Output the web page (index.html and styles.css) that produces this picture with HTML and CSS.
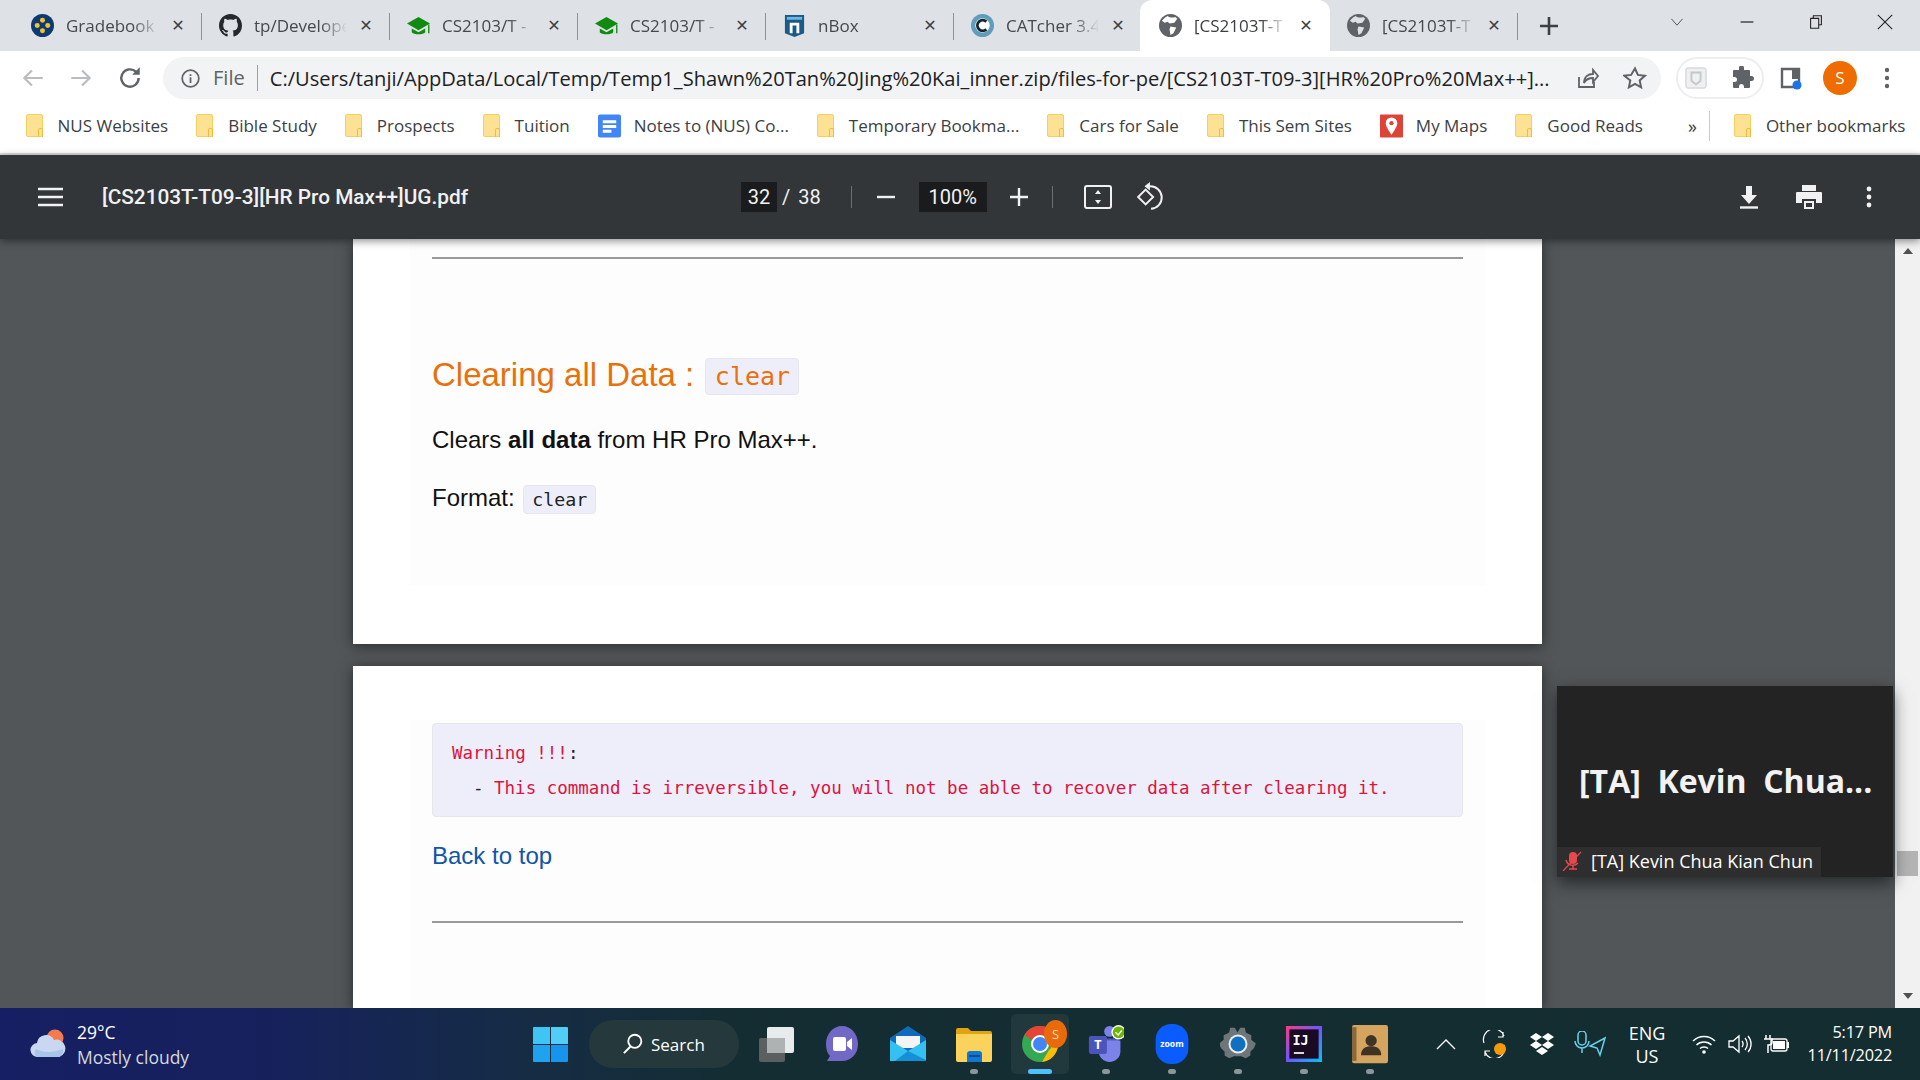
FILE: index.html
```html
<!doctype html>
<html lang="en">
<head>
<meta charset="utf-8">
<title>[CS2103T-T09-3][HR Pro Max++]UG.pdf</title>
<link rel="stylesheet" href="styles.css">
</head>
<body>

<!-- tabs -->
<div class="tabstrip">
	<div class="tab">
		<svg class="favicon" viewBox="0 0 24 24"><circle cx="12" cy="12" r="12" fill="#0d3a73"/><circle cx="12" cy="6.5" r="2.6" fill="#f2c230"/><circle cx="6.5" cy="12" r="2.6" fill="#f2c230"/><circle cx="17.5" cy="12" r="2.6" fill="#f2c230"/><circle cx="12" cy="17.5" r="2.6" fill="#f2c230"/></svg>
		<span class="tab-title">Gradebook</span><span class="tab-close">&#10005;</span>
	</div>
	<div class="tab">
		<svg class="favicon" viewBox="0 0 16 16"><path fill="#24292e" d="M8 0C3.58 0 0 3.58 0 8c0 3.54 2.29 6.53 5.47 7.59.4.07.55-.17.55-.38 0-.19-.01-.82-.01-1.49-2.01.37-2.53-.49-2.69-.94-.09-.23-.48-.94-.82-1.13-.28-.15-.68-.52-.01-.53.63-.01 1.08.58 1.23.82.72 1.21 1.87.87 2.33.66.07-.52.28-.87.51-1.07-1.78-.2-3.64-.89-3.64-3.95 0-.87.31-1.59.82-2.15-.08-.2-.36-1.02.08-2.12 0 0 .67-.21 2.2.82.64-.18 1.32-.27 2-.27s1.36.09 2 .27c1.53-1.04 2.2-.82 2.2-.82.44 1.1.16 1.92.08 2.12.51.56.82 1.27.82 2.15 0 3.07-1.87 3.75-3.65 3.95.29.25.54.73.54 1.48 0 1.07-.01 1.93-.01 2.2 0 .21.15.46.55.38A8.01 8.01 0 0 0 16 8c0-4.42-3.58-8-8-8z"/></svg>
		<span class="tab-title">tp/Develope</span><span class="tab-close">&#10005;</span>
	</div>
	<div class="tab">
		<svg class="favicon" viewBox="0 0 24 24"><path fill="#108a10" d="M12 3 0 10l12 7 12-7z"/><path fill="#108a10" d="M5 15v4c2 3 12 3 14 0v-4l-7 4z"/><path fill="#108a10" d="M22 11h1.4v9H22z"/></svg>
		<span class="tab-title">CS2103/T -</span><span class="tab-close">&#10005;</span>
	</div>
	<div class="tab">
		<svg class="favicon" viewBox="0 0 24 24"><path fill="#108a10" d="M12 3 0 10l12 7 12-7z"/><path fill="#108a10" d="M5 15v4c2 3 12 3 14 0v-4l-7 4z"/><path fill="#108a10" d="M22 11h1.4v9H22z"/></svg>
		<span class="tab-title">CS2103/T -</span><span class="tab-close">&#10005;</span>
	</div>
	<div class="tab">
		<svg class="favicon" viewBox="0 0 24 24"><path fill="#1a5a8a" d="M2 1h20v19l-10 4-10-4z"/><path fill="#6fb7dc" d="M4 3h16v3H4z"/><path fill="#fff" d="M7 20V9h10v11h-3v-8h-4v8z"/></svg>
		<span class="tab-title">nBox</span><span class="tab-close">&#10005;</span>
	</div>
	<div class="tab">
		<svg class="favicon" viewBox="0 0 24 24"><circle cx="12" cy="12" r="12" fill="#5f9dbd"/><circle cx="12" cy="12" r="7.5" fill="#fff"/><path d="M16 8a5.500 5.500 0 1 0 0 8" fill="none" stroke="#17242c" stroke-width="3"/></svg>
		<span class="tab-title">CATcher 3.4</span><span class="tab-close">&#10005;</span>
	</div>
	<div class="tab tab-active">
		<svg class="favicon" viewBox="0 0 24 24"><circle cx="12" cy="12" r="12" fill="#5f6368"/><path fill="#fff" d="M9 2c2 2 6 2 8 1l2 2-3 4-5 1-2-2-3 1-3-2 3-3zM12 13l6 1-3 6-3 2-1-6z"/></svg>
		<span class="tab-title">[CS2103T-T</span><span class="tab-close">&#10005;</span>
	</div>
	<div class="tab">
		<svg class="favicon" viewBox="0 0 24 24"><circle cx="12" cy="12" r="12" fill="#5f6368"/><path fill="#dee1e6" d="M9 2c2 2 6 2 8 1l2 2-3 4-5 1-2-2-3 1-3-2 3-3zM12 13l6 1-3 6-3 2-1-6z"/></svg>
		<span class="tab-title">[CS2103T-T</span><span class="tab-close">&#10005;</span>
	</div>
	<svg class="newtab" viewBox="0 0 20 20"><path d="M10 1v18M1 10h18" stroke="#3c4043" stroke-width="2.6"/></svg>
	<div class="winctl">
		<svg viewBox="0 0 20 20" class="win-chevron"><path d="M3 6l7 8 7-8" fill="none" stroke="#444" stroke-width="1.1"/></svg>
		<svg viewBox="0 0 20 20" class="win-min"><path d="M2 10h16" stroke="#222" stroke-width="1.5"/></svg>
		<svg viewBox="0 0 20 20" class="win-max"><path d="M4 6h9v11H4zM7 6V3h9v10h-3" fill="none" stroke="#222" stroke-width="1.2"/></svg>
		<svg viewBox="0 0 20 20" class="win-close"><path d="M2 2l16 16M18 2 2 18" stroke="#222" stroke-width="1.2"/></svg>
	</div>
</div>

<!-- address bar -->
<div class="toolbar">
	<svg class="nav nav-back" viewBox="0 0 24 24"><path d="M21 12H4M11 5l-7 7 7 7" fill="none" stroke="#b9bcc0" stroke-width="2"/></svg>
	<svg class="nav nav-fwd" viewBox="0 0 24 24"><path d="M3 12h17M13 5l7 7-7 7" fill="none" stroke="#b9bcc0" stroke-width="2"/></svg>
	<svg class="nav nav-reload" viewBox="0 0 24 24"><path d="M20 12a8 8 0 1 1-2.400-5.700" fill="none" stroke="#5f6368" stroke-width="2.200"/><path d="M21 2v7h-7z" fill="#5f6368"/></svg>
	<div class="omnibox">
		<svg class="info" viewBox="0 0 24 24"><circle cx="12" cy="12" r="9.500" fill="none" stroke="#5f6368" stroke-width="2"/><path d="M11 10.500h2V17h-2zM11 7h2v2h-2z" fill="#5f6368"/></svg>
		<span class="scheme">File</span>
		<span class="url">C:/Users/tanji/AppData/Local/Temp/Temp1_Shawn%20Tan%20Jing%20Kai_inner.zip/files-for-pe/[CS2103T-T09-3][HR%20Pro%20Max++]...</span>
		<svg class="omni-share" viewBox="0 0 24 24"><path d="M4 11v10h15v-5" fill="none" stroke="#5f6368" stroke-width="1.800"/><path d="M9 17c0-6 4-9 9-9V4l5 6-5 6v-4c-4 0-7 1-9 5z" fill="none" stroke="#5f6368" stroke-width="1.800"/></svg>
		<svg class="omni-star" viewBox="0 0 24 24"><path d="M12 2.500l2.900 6.400 7 .8-5.200 4.700 1.400 6.900-6.100-3.500-6.100 3.500 1.400-6.900L1.100 9.700l7-.8z" fill="none" stroke="#5f6368" stroke-width="2"/></svg>
	</div>
	<div class="extpill">
		<svg class="ext-shield" viewBox="0 0 24 24"><rect x="1" y="1" width="22" height="22" rx="2" fill="#eef0f1" stroke="#c4c7ca"/><path d="M7 6h10v9l-5 4-5-4z" fill="none" stroke="#c4c7ca" stroke-width="2"/></svg>
		<svg class="ext-puzzle" viewBox="0 0 24 24"><path fill="#5f6368" d="M9 2a2.500 2.500 0 0 1 5 0v2h5a1 1 0 0 1 1 1v5h1.500a2.500 2.500 0 0 1 0 5H20v6a1 1 0 0 1-1 1h-5v-1.500a2.500 2.500 0 0 0-5 0V22H4a1 1 0 0 1-1-1v-5h1.500a2.500 2.500 0 0 0 0-5H3V5a1 1 0 0 1 1-1h5z"/></svg>
	</div>
	<svg class="sidepanel" viewBox="0 0 24 24"><path d="M3 3h17v18H3z" fill="none" stroke="#5f6368" stroke-width="2.400"/><path d="M13 3h7v10h-7z" fill="#5f6368"/><circle cx="18" cy="19" r="4.500" fill="#1a73e8"/></svg>
	<div class="avatar">S</div>
	<svg class="kebab" viewBox="0 0 6 24"><circle cx="3" cy="4" r="2.200" fill="#5f6368"/><circle cx="3" cy="12" r="2.200" fill="#5f6368"/><circle cx="3" cy="20" r="2.200" fill="#5f6368"/></svg>
</div>

<!-- bookmarks -->
<div class="bookmarks">
	<div class="bm"><i class="folder"></i>NUS Websites</div>
	<div class="bm"><i class="folder"></i>Bible Study</div>
	<div class="bm"><i class="folder"></i>Prospects</div>
	<div class="bm"><i class="folder"></i>Tuition</div>
	<div class="bm"><svg class="bm-icon" viewBox="0 0 24 24"><rect width="24" height="24" rx="2" fill="#4285f4"/><path d="M5 6h14v3H5zM5 11h14v3H5zM5 16h9v3H5z" fill="#fff"/></svg>Notes to (NUS) Co...</div>
	<div class="bm"><i class="folder"></i>Temporary Bookma...</div>
	<div class="bm"><i class="folder"></i>Cars for Sale</div>
	<div class="bm"><i class="folder"></i>This Sem Sites</div>
	<div class="bm"><svg class="bm-icon" viewBox="0 0 24 24"><rect width="24" height="24" rx="1" fill="#db4437"/><path d="M12 3a6 6 0 0 0-6 6c0 4 6 12 6 12s6-8 6-12a6 6 0 0 0-6-6z" fill="#fff"/><circle cx="12" cy="9" r="2.200" fill="#db4437"/></svg>My Maps</div>
	<div class="bm"><i class="folder"></i>Good Reads</div>
	<div class="bm-more">&raquo;</div>
	<div class="bm-sep"></div>
	<div class="bm"><i class="folder"></i>Other bookmarks</div>
</div>

<!-- pdf viewer toolbar -->
<div class="pdfbar">
	<svg class="pdf-menu" viewBox="0 0 25 20"><path d="M0 2h25M0 10h25M0 18h25" stroke="#f1f1f1" stroke-width="2.600"/></svg>
	<div class="pdf-title">[CS2103T-T09-3][HR Pro Max++]UG.pdf</div>
	<div class="pdf-pageinput">32</div>
	<span class="pdf-slash">/</span>
	<span class="pdf-total">38</span>
	<div class="pdf-sep pdf-sep-a"></div>
	<svg class="pdf-minus" viewBox="0 0 20 20"><path d="M1 10h18" stroke="#f1f1f1" stroke-width="2.400"/></svg>
	<div class="pdf-zoom">100%</div>
	<svg class="pdf-plus" viewBox="0 0 20 20"><path d="M1 10h18M10 1v18" stroke="#f1f1f1" stroke-width="2.400"/></svg>
	<div class="pdf-sep pdf-sep-b"></div>
	<svg class="pdf-fit" viewBox="0 0 28 24"><rect x="1" y="1" width="26" height="22" rx="2" fill="none" stroke="#f1f1f1" stroke-width="2"/><path d="M14 5l3 4h-6zM14 19l-3-4h6z" fill="#f1f1f1"/></svg>
	<svg class="pdf-rotate" viewBox="0 0 28 28"><path d="M2 14l7-7 7 7-7 7z" fill="none" stroke="#f1f1f1" stroke-width="1.800"/><path d="M13 4a10.500 10.500 0 0 1 1 21" fill="none" stroke="#f1f1f1" stroke-width="1.800"/><path d="M13 0v8l-5-4z" fill="#f1f1f1"/></svg>
	<svg class="pdf-download" viewBox="0 0 20 24"><path d="M7 1h6v9h5l-8 9-8-9h5z" fill="#f1f1f1"/><path d="M1 22.500h18" stroke="#f1f1f1" stroke-width="2.400"/></svg>
	<svg class="pdf-print" viewBox="0 0 26 24"><path d="M6 0h14v6H6z" fill="#f1f1f1"/><path d="M1 7h24a1 1 0 0 1 1 1v10h-6v-4H6v4H0V8a1 1 0 0 1 1-1z" fill="#f1f1f1"/><path d="M8 16h10v8H8z" fill="#f1f1f1"/><path d="M10 18h6v4h-6z" fill="#323639"/></svg>
	<svg class="pdf-more" viewBox="0 0 6 24"><circle cx="3" cy="4" r="2.400" fill="#f1f1f1"/><circle cx="3" cy="12" r="2.400" fill="#f1f1f1"/><circle cx="3" cy="20" r="2.400" fill="#f1f1f1"/></svg>
</div>

<!-- document -->
<div class="viewer">
	<div class="pages">
		<div class="page page-one">
			<div class="page-inner">
				<hr class="rule rule-top">
				<h2 class="heading">Clearing all Data : <code class="pill pill-big">clear</code></h2>
				<p class="para para-first">Clears <b>all data</b> from HR Pro Max++.</p>
				<p class="para para-second">Format: <code class="pill pill-small">clear</code></p>
			</div>
		</div>
		<div class="page page-two">
			<div class="page-inner">
				<div class="warning">
					<div class="warn-line"><span class="red">Warning !!!</span>:</div>
					<div class="warn-line warn-item"><span class="warn-dash">-</span><span class="red">This command is irreversible, you will not be able to recover data after clearing it.</span></div>
				</div>
				<p class="para para-link"><a class="backtop">Back to top</a></p>
				<hr class="rule rule-bottom">
			</div>
		</div>
	</div>
	<div class="scrollbar">
		<i class="arrow-up"></i>
		<div class="thumb"></div>
		<i class="arrow-down"></i>
	</div>
</div>

<!-- taskbar -->
<div class="taskbar">
	<div class="weather">
		<svg class="weather-icon" viewBox="0 0 36 30"><circle cx="25" cy="9" r="8.500" fill="#f47b4f"/><path d="M8 28a7 7 0 0 1-1-14 9 9 0 0 1 17-3 8 8 0 0 1 5 17z" fill="#c9d8f0"/><path d="M6 20c8 4 16 4 27 0v2c0 4-3 6-5 6H8c-2 0-5-3-2-8z" fill="#a9c4ea"/></svg>
		<div class="weather-text"><div class="temp">29&deg;C</div><div class="cond">Mostly cloudy</div></div>
	</div>
	<svg class="winlogo" viewBox="0 0 35 35"><path d="M0 1a1 1 0 0 1 1-1h16v17H0z" fill="#3fc4f6"/><path d="M18 0h16a1 1 0 0 1 1 1v16H18z" fill="#52cdf8"/><path d="M0 18h17v17H1a1 1 0 0 1-1-1z" fill="#1fa3ee"/><path d="M18 18h17v16a1 1 0 0 1-1 1H18z" fill="#1794ec"/></svg>
	<div class="searchpill">
		<svg viewBox="0 0 22 24" class="search-icon"><circle cx="13" cy="9" r="7.200" fill="none" stroke="#fff" stroke-width="2"/><path d="M8 15l-7 7" stroke="#fff" stroke-width="2.200"/></svg>
		<span>Search</span>
	</div>
	<div class="apps">
		<div class="app"><svg viewBox="0 0 36 36"><rect x="1" y="12" width="26" height="24" rx="2" fill="#5c5f60"/><rect x="9" y="1" width="27" height="26" rx="2" fill="#e8ebeb"/><rect x="9" y="12" width="18" height="15" fill="#aeb2b3"/></svg></div>
		<div class="app"><svg viewBox="0 0 36 36"><path d="M18 0c9 0 16 8 16 18s-7 17-16 17H3l3-5C3 27 2 23 2 18 2 8 9 0 18 0z" fill="#7268c6"/><rect x="9" y="11" width="13" height="14" rx="2" fill="#fff"/><path d="M23 16l5-4v12l-5-4z" fill="#fff"/></svg></div>
		<div class="app"><svg viewBox="0 0 36 36"><path d="M0 12 18 0l18 12v22H0z" fill="#0f6cbd"/><path d="M6 10h24v12H6z" fill="#f4f4f4"/><path d="M0 14l18 11 18-11v21H0z" fill="#34c0f0"/><path d="M36 35H5l13-10 18 9z" fill="#1590d8"/></svg></div>
		<div class="app app-running"><svg viewBox="0 0 36 36"><path d="M0 4a2 2 0 0 1 2-2h10l3 3h19a2 2 0 0 1 2 2v5H0z" fill="#e0a40e"/><path d="M0 8h36v26a2 2 0 0 1-2 2H2a2 2 0 0 1-2-2z" fill="#fbd35c"/><path d="M11 36V28a3 3 0 0 1 3-3h9a3 3 0 0 1 3 3v8z" fill="#0f78d4"/><path d="M13 30h11" stroke="#0b4c8a" stroke-width="2"/></svg></div>
		<div class="app app-active">
			<svg viewBox="0 0 36 36" class="chrome-logo"><circle cx="18" cy="18" r="18" fill="#34a853"/><path d="M18 0a18 18 0 0 1 15.600 9H18a9 9 0 0 0-8 5L2.400 9A18 18 0 0 1 18 0z" fill="#ea4335"/><path d="M33.600 9A18 18 0 0 1 20 36l7-12a9 9 0 0 0-1-15z" fill="#fbbc05"/><circle cx="18" cy="18" r="9" fill="#fff"/><circle cx="18" cy="18" r="7" fill="#4285f4"/></svg>
			<div class="chrome-badge">S</div>
		</div>
		<div class="app app-running">
			<svg viewBox="0 0 40 44"><circle cx="24" cy="8" r="6" fill="#7b83eb"/><path d="M14 16h20v14a10 10 0 0 1-20 0z" fill="#5059c9"/><path d="M12 18h24v12a12 12 0 0 1-24 0z" fill="#7b83eb"/><rect x="1" y="13" width="20" height="20" rx="2" fill="#4b53bc"/><text x="11" y="28" class="teams-t">T</text><circle cx="34" cy="9" r="8" fill="#fff"/><circle cx="34" cy="9" r="6.500" fill="#6bb700"/><path d="M30.500 9l3 3 4-5" fill="none" stroke="#fff" stroke-width="1.500"/></svg>
		</div>
		<div class="app app-running"><svg viewBox="0 0 36 44"><rect width="36" height="44" rx="17" fill="#0b5cff"/><text x="18" y="25" class="zoom-t">zoom</text></svg></div>
		<div class="app app-running"><svg viewBox="0 0 36 36"><path d="M18 5l3-5h5l1 5 6 3v5l5 4-2 5-4 4v4l-5 3-5-2h-8l-5 2-5-3v-4l-4-4-2-5 5-4V8l6-3 1-5h5z" transform="scale(.92) translate(1 2)" fill="#6e7679"/><circle cx="18" cy="18" r="9.500" fill="#e8edef"/><circle cx="18" cy="18" r="7.500" fill="#0f6fc0"/></svg></div>
		<div class="app app-running"><svg viewBox="0 0 32 32"><defs><linearGradient id="ij" x1="0" y1="0" x2="1" y2="1"><stop offset="0" stop-color="#fd3b7e"/><stop offset=".5" stop-color="#6b57ff"/><stop offset="1" stop-color="#07c3f2"/></linearGradient></defs><rect width="32" height="32" fill="url(#ij)"/><rect x="3" y="3" width="26" height="26" fill="#1a0a22"/><text x="13" y="17" class="ij-t">IJ</text><path d="M7 24h9" stroke="#fff" stroke-width="1.500"/></svg></div>
		<div class="app app-running"><svg viewBox="0 0 32 34"><rect width="32" height="34" rx="2" fill="#d5a45e"/><path d="M0 2h4v30H0z" fill="#8a6a3c"/><circle cx="17" cy="14" r="5" fill="#3f3326"/><path d="M8 27c0-6 4-8 9-8s9 2 9 8z" fill="#3f3326"/></svg></div>
	</div>
	<div class="tray">
		<svg class="tray-caret" viewBox="0 0 20 12"><path d="M1 11l9-9 9 9" fill="none" stroke="#fff" stroke-width="1.300"/></svg>
		<div class="tray-sync"><svg viewBox="0 0 26 28"><path d="M2 13A10 10 0 0 1 22 6M21 2v5h-5" fill="none" stroke="#fff" stroke-width="1.200"/><path d="M22 15A10 10 0 0 1 3 22M3 26v-5h5" fill="none" stroke="#fff" stroke-width="1.200"/><circle cx="18" cy="19" r="6" fill="#f59a0c"/></svg></div>
		<svg class="tray-dropbox" viewBox="0 0 24 22"><path d="M6 0l6 4-6 4-6-4zM18 0l6 4-6 4-6-4zM6 8l6 4-6 4-6-4zM18 8l6 4-6 4-6-4zM12 14l6 4-6 4-6-4z" fill="#fff"/></svg>
		<svg class="tray-mic" viewBox="0 0 32 26"><rect x="4" y="0" width="8" height="14" rx="4" fill="none" stroke="#69d2ea" stroke-width="1.500"/><path d="M1 10a7 7 0 0 0 14 0M8 17v5" fill="none" stroke="#69d2ea" stroke-width="1.500"/><path d="M31 7 16 15l7 2 3 7z" fill="none" stroke="#69d2ea" stroke-width="1.500"/></svg>
		<div class="tray-lang">ENG<br>US</div>
		<svg class="tray-wifi" viewBox="0 0 24 20"><path d="M1 7c6-6 16-6 22 0M4.500 11c4-4 11-4 15 0M8 14.500c2-2 6-2 8 0" fill="none" stroke="#fff" stroke-width="1.500"/><circle cx="12" cy="18" r="1.800" fill="#fff"/></svg>
		<svg class="tray-vol" viewBox="0 0 24 20"><path d="M1 7h4l6-5v16l-6-5H1z" fill="none" stroke="#fff" stroke-width="1.300"/><path d="M14 7a5 5 0 0 1 0 6M17 4a9 9 0 0 1 0 12M20 2a12 12 0 0 1 0 16" fill="none" stroke="#fff" stroke-width="1.300"/></svg>
		<svg class="tray-batt" viewBox="0 0 26 20"><path d="M3 1v4M7 1v4M1 5h8v3a3 3 0 0 1-3 3h-1v8" fill="none" stroke="#fff" stroke-width="1.500"/><rect x="8" y="5" width="16" height="12" rx="2" fill="none" stroke="#fff" stroke-width="1.300"/><rect x="10" y="7" width="12" height="8" fill="#fff"/><rect x="24" y="8" width="2" height="6" fill="#fff"/></svg>
		<div class="tray-clock">5:17 PM<br>11/11/2022</div>
	</div>
</div>

<!-- zoom call thumbnail floating over the screen -->
<div class="zoomcall">
	<div class="zoomcall-name">[TA]&nbsp; Kevin&nbsp; Chua...</div>
	<div class="zoomcall-label">
		<svg viewBox="0 0 20 20"><rect x="7" y="1" width="8" height="12" rx="4" fill="#e5484d"/><path d="M4 9a7 7 0 0 0 12 3M11 15v3M7 18h8" fill="none" stroke="#e5484d" stroke-width="1.500"/><path d="M1 20 19 1" stroke="#e5484d" stroke-width="1.200"/></svg>
		<span>[TA] Kevin Chua Kian Chun</span>
	</div>
</div>

</body>
</html>
```
FILE: styles.css
```css
html, body {
	width:100%;
	height:100%;
	margin:0;
	padding:0;
	overflow:hidden;
}

body {
	display:flex;
	flex-direction:column;
	font-family:"Open Sans", sans-serif;
	color:#202124;
	background:#525659;
}

svg {
	display:block;
	flex:none;
}

/* tabs */
.tabstrip {
	display:flex;
	align-items:center;
	height:51px;
	flex:none;
	padding-left:14px;
	background:#dee1e6;
}

.tab {
	position:relative;
	display:flex;
	align-items:center;
	width:188px;
	height:51px;
	padding-left:17px;
	box-sizing:border-box;
	font-size:17px;
	color:#45494d;
}

.tab::after {
	content:"";
	position:absolute;
	right:0;
	top:13px;
	height:27px;
	width:1px;
	background:#8f9399;
}

.tab-active {
	width:190px;
	margin-left:-2px;
	padding-left:19px;
	background:#fff;
	border-radius:12px 12px 0 0;
	color:#3c4043;
}

.tab-active::after, .tab:nth-child(6)::after {
	display:none;
}

.favicon {
	width:23px;
	height:23px;
}

.tab-title {
	width:98px;
	margin-left:12px;
	white-space:nowrap;
	overflow:hidden;
	-webkit-mask-image:linear-gradient(90deg, #000 68%, transparent 95%);
	mask-image:linear-gradient(90deg, #000 68%, transparent 95%);
}

.tab-close {
	width:24px;
	margin-left:2px;
	text-align:center;
	font-size:16px;
	font-weight:700;
	color:#3c4043;
	font-family:"DejaVu Sans", sans-serif;
}

.newtab {
	width:20px;
	height:20px;
	margin-left:21px;
}

.winctl {
	display:flex;
	align-items:center;
	margin-left:auto;
}

.win-chevron { width:16px; height:16px; margin-right:54px; margin-top:-8px; }
.win-min { width:16px; height:16px; margin-right:52px; margin-top:-8px; }
.win-max { width:18px; height:18px; margin-right:51px; margin-top:-8px; }
.win-close { width:18px; height:18px; margin-right:26px; margin-top:-8px; }

/* address bar */
.toolbar {
	display:flex;
	align-items:center;
	height:52px;
	padding-top:2px;
	box-sizing:border-box;
	flex:none;
	background:#fff;
}

.nav {
	width:26px;
	height:26px;
}

.nav-back { margin-left:20px; }
.nav-fwd { margin-left:22px; }
.nav-reload { margin-left:23px; }

.omnibox {
	display:flex;
	align-items:center;
	width:1498px;
	height:42px;
	margin-left:20px;
	padding-left:17px;
	box-sizing:border-box;
	border-radius:21px;
	background:#f1f3f4;
	font-size:20.100px;
	white-space:nowrap;
}

.info {
	width:21px;
	height:21px;
}

.scheme {
	margin-left:12px;
	padding-right:12px;
	border-right:1px solid #9aa0a6;
	line-height:26px;
	color:#5f6368;
}

.url {
	margin-left:12px;
	width:1281px;
	color:#202124;
}

.omni-share { width:24px; height:24px; margin-left:24px; }
.omni-star { width:24px; height:24px; margin-left:24px; }

.extpill {
	display:flex;
	align-items:center;
	width:88px;
	height:42px;
	margin-left:15px;
	box-sizing:border-box;
	border:2px solid #eceef0;
	border-radius:21px;
}

.ext-shield { width:22px; height:24px; margin-left:7px; }
.ext-puzzle { width:24px; height:24px; margin-left:23px; }
.sidepanel { width:24px; height:24px; margin-left:15px; }

.avatar {
	width:34px;
	height:34px;
	margin-left:20px;
	border-radius:50%;
	background:#ef6c00;
	color:#fff;
	text-align:center;
	font-size:17px;
	line-height:34px;
}

.kebab { width:6px; height:24px; margin-left:27px; }

/* bookmarks */
.bookmarks {
	display:flex;
	align-items:center;
	gap:28px;
	height:50px;
	flex:none;
	box-sizing:content-box;
	padding:0 0 0 25.500px;
	background:#fff;
	border-bottom:2px solid #dcdcdc;
	font-size:17px;
	color:#3c4043;
	white-space:nowrap;
}

.bm {
	display:flex;
	align-items:center;
	gap:15px;
	margin-top:-5px;
}

.folder {
	position:relative;
	display:block;
	width:17px;
	height:23px;
	box-sizing:border-box;
	background:#fde293;
	border:1px solid #f6cf5f;
	border-radius:2px;
}

.folder::after {
	content:"";
	position:absolute;
	right:-1px;
	bottom:-1px;
	width:3px;
	height:8px;
	border:1px solid #eebd3f;
	border-bottom:0;
	border-radius:2px 2px 0 0;
}

.bm-icon {
	width:23px;
	height:24px;
	margin-right:-2px;
}

.bm-more {
	margin-left:17px;
	margin-top:-5px;
	font-size:18px;
}

.bm-sep {
	width:1px;
	height:30px;
	margin:-5px -4px 0 -16px;
	background:#c8cacc;
}

/* pdf toolbar */
.pdfbar {
	position:relative;
	z-index:2;
	display:flex;
	align-items:center;
	height:84px;
	flex:none;
	background:#323639;
	color:#f1f1f1;
	font-family:Roboto, sans-serif;
	font-size:20px;
	box-shadow:0 2px 8px rgba(0,0,0,.45);
}

.pdf-menu { width:25px; height:20px; margin-left:38px; }

.pdf-title {
	width:639px;
	margin-left:39px;
	font-size:20.800px;
	font-weight:500;
	white-space:nowrap;
}

.pdf-pageinput {
	width:36px;
	height:30px;
	line-height:30px;
	text-align:center;
	background:#191b1c;
}

.pdf-slash { margin-left:5px; }
.pdf-total { margin-left:8px; }

.pdf-sep {
	width:1px;
	height:22px;
	background:#6b6f72;
}

.pdf-sep-a { margin-left:30px; }
.pdf-minus { width:20px; height:20px; margin-left:24px; }

.pdf-zoom {
	width:68px;
	height:30px;
	margin-left:23px;
	line-height:30px;
	text-align:center;
	background:#191b1c;
}

.pdf-plus { width:20px; height:20px; margin-left:22px; }
.pdf-sep-b { margin-left:23px; }
.pdf-fit { width:28px; height:24px; margin-left:31px; }
.pdf-rotate { width:30px; height:30px; margin-left:24px; }
.pdf-download { width:20px; height:24px; margin-left:573px; }
.pdf-print { width:26px; height:24px; margin-left:37px; }
.pdf-more { width:6px; height:24px; margin-left:44px; }

/* document area */
.viewer {
	display:flex;
	flex:1;
	min-height:0;
	background:#525659;
}

.pages {
	flex:1;
	display:flex;
	flex-direction:column;
	align-items:center;
	gap:22px;
}

.page {
	width:1189px;
	padding:0 57px 0 57px;
	box-sizing:border-box;
	background:#fff;
	box-shadow:0 2px 12px rgba(0,0,0,.5);
	font-family:"Liberation Sans", Arial, sans-serif;
}

.page-one {
	height:405px;
}

.page-two {
	height:342px;
	padding-top:54px;
}

.page-inner {
	padding:0 22px;
	background:#fdfdfd;
}

.page-one .page-inner {
	height:346px;
	overflow:hidden;
}

.page-two .page-inner {
	height:288px;
	padding-top:3px;
	box-sizing:border-box;
}

.rule {
	height:2px;
	margin:0;
	border:0;
	background:#999;
}

.rule-top { margin-top:18px; }
.rule-bottom { margin-top:50px; }

.heading {
	display:flex;
	align-items:flex-start;
	gap:2px;
	height:38px;
	margin:98px 0 0;
	font-size:33px;
	line-height:36px;
	font-weight:400;
	color:#e8710a;
	white-space:pre;
}

.pill {
	display:inline-block;
	box-sizing:border-box;
	background:#eeeefb;
	border:1px solid #e6e6ee;
	border-radius:4px;
	font-family:"DejaVu Sans Mono", monospace;
	text-align:center;
}

.pill-big {
	width:94px;
	height:37px;
	margin-top:1px;
	line-height:35px;
	font-size:25px;
}

.pill-small {
	width:73px;
	height:29px;
	line-height:27px;
	font-size:18.300px;
	color:#222;
	vertical-align:0;
	margin-left:2px;
}

.para {
	margin:0;
	font-size:24px;
	line-height:30px;
	color:#111;
}

.para-first { margin-top:30px; }
.para-second { margin-top:28px; }
.para-link { margin-top:24px; }

.warning {
	height:94px;
	padding:12px 19px 0;
	box-sizing:border-box;
	background:#eeeefb;
	border:1px solid #e6e6ee;
	border-radius:4px;
	font-family:"DejaVu Sans Mono", monospace;
	font-size:17.500px;
	line-height:35px;
	color:#222;
	white-space:nowrap;
}

.warn-item {
	padding-left:21px;
}

.warn-dash {
	margin-right:10.500px;
}

.red {
	color:#dc143c;
}

.backtop {
	color:#0f55a8;
}

.scrollbar {
	display:flex;
	flex-direction:column;
	align-items:center;
	width:25px;
	background:#f1f1f1;
}

.arrow-up {
	width:0;
	height:0;
	margin-top:9px;
	border:5px solid transparent;
	border-top:0;
	border-bottom:6px solid #505050;
}

.thumb {
	width:21px;
	height:25px;
	margin-top:597px;
	background:#b4b4b4;
}

.arrow-down {
	width:0;
	height:0;
	margin-top:auto;
	margin-bottom:9px;
	border:5px solid transparent;
	border-bottom:0;
	border-top:6px solid #505050;
}

/* taskbar */
.taskbar {
	display:flex;
	align-items:center;
	height:72px;
	flex:none;
	background:linear-gradient(90deg, #161f63 0, #16215c 14%, #152c45 27%, #142d33 38%, #142d30 100%);
	color:#fff;
}

.weather {
	display:flex;
	align-items:center;
	width:533px;
	padding-left:30px;
	box-sizing:border-box;
}

.weather-icon { width:36px; height:30px; }

.weather-text {
	margin:2px 0 0 11px;
	font-size:17.500px;
	line-height:25px;
}

.cond { color:#d5d8dc; }

.winlogo { width:35px; height:35px; }

.searchpill {
	display:flex;
	align-items:center;
	width:150px;
	height:48px;
	margin-left:21px;
	padding-left:34px;
	box-sizing:border-box;
	border-radius:24px;
	background:#25393c;
	font-size:17px;
}

.search-icon { width:20px; height:22px; margin-right:8px; }

.apps {
	display:flex;
	align-items:center;
	margin-left:4px;
}

.app {
	position:relative;
	display:flex;
	align-items:center;
	justify-content:center;
	width:66px;
	height:60px;
}

.app svg {
	width:36px;
	height:40px;
}

.app-running::after {
	content:"";
	position:absolute;
	left:29px;
	bottom:0;
	width:8px;
	height:5px;
	border-radius:3px;
	background:#8b9698;
}

.app-active::before {
	content:"";
	position:absolute;
	left:4px;
	top:0;
	width:58px;
	height:60px;
	border-radius:5px;
	background:#21393c;
}

.app-active::after {
	content:"";
	position:absolute;
	left:21px;
	bottom:0;
	width:24px;
	height:5px;
	border-radius:3px;
	background:#4cc2ff;
}

.app-active svg { position:relative; }

.chrome-badge {
	position:absolute;
	left:37px;
	top:6px;
	width:23px;
	height:28px;
	border-radius:50%;
	background:#ea6a0a;
	color:#f6d8bc;
	font-size:13px;
	line-height:28px;
	text-align:center;
}

.teams-t {
	font:700 14px "Open Sans", sans-serif;
	fill:#fff;
	text-anchor:middle;
}

.zoom-t {
	font:700 9.500px "Open Sans", sans-serif;
	fill:#fff;
	text-anchor:middle;
}

.ij-t {
	font:700 12px "DejaVu Sans Mono", monospace;
	fill:#fff;
	text-anchor:middle;
}

.tray {
	display:flex;
	align-items:center;
	flex:1;
	padding-left:33px;
	font-size:18px;
}

.tray-caret { width:20px; height:12px; }
.tray-sync { width:28px; margin-left:26px; }
.tray-sync svg { width:26px; height:28px; }
.tray-dropbox { width:24px; height:22px; margin-left:20px; }
.tray-mic { width:32px; height:26px; margin-left:20px; }

.tray-lang {
	width:50px;
	margin-left:16px;
	padding-top:2px;
	text-align:center;
	line-height:23px;
}

.tray-wifi { width:24px; height:20px; margin-left:20px; }
.tray-vol { width:24px; height:20px; margin-left:12px; }
.tray-batt { width:26px; height:20px; margin-left:11px; }

.tray-clock {
	margin-left:auto;
	padding-right:28px;
	text-align:right;
	font-size:16.300px;
	letter-spacing:-.2px;
	line-height:23px;
}

/* floating call window */
.zoomcall {
	position:absolute;
	left:1557px;
	top:686px;
	z-index:3;
	width:336px;
	height:191px;
	display:flex;
	flex-direction:column;
	background:#232323;
	box-shadow:0 6px 16px rgba(0,0,0,.55);
	font-family:"Open Sans", sans-serif;
	color:#fff;
}

.zoomcall-name {
	flex:1;
	padding:73px 0 0 22px;
	font-size:32px;
	line-height:44px;
	font-weight:700;
	white-space:nowrap;
	color:#f2f2f2;
}

.zoomcall-label {
	display:flex;
	align-items:center;
	gap:9px;
	width:264px;
	height:30px;
	padding:0 0 2px 5px;
	box-sizing:border-box;
	background:#2e2e2e;
	font-size:18px;
	white-space:nowrap;
}

.zoomcall-label svg {
	width:20px;
	height:20px;
}
```
